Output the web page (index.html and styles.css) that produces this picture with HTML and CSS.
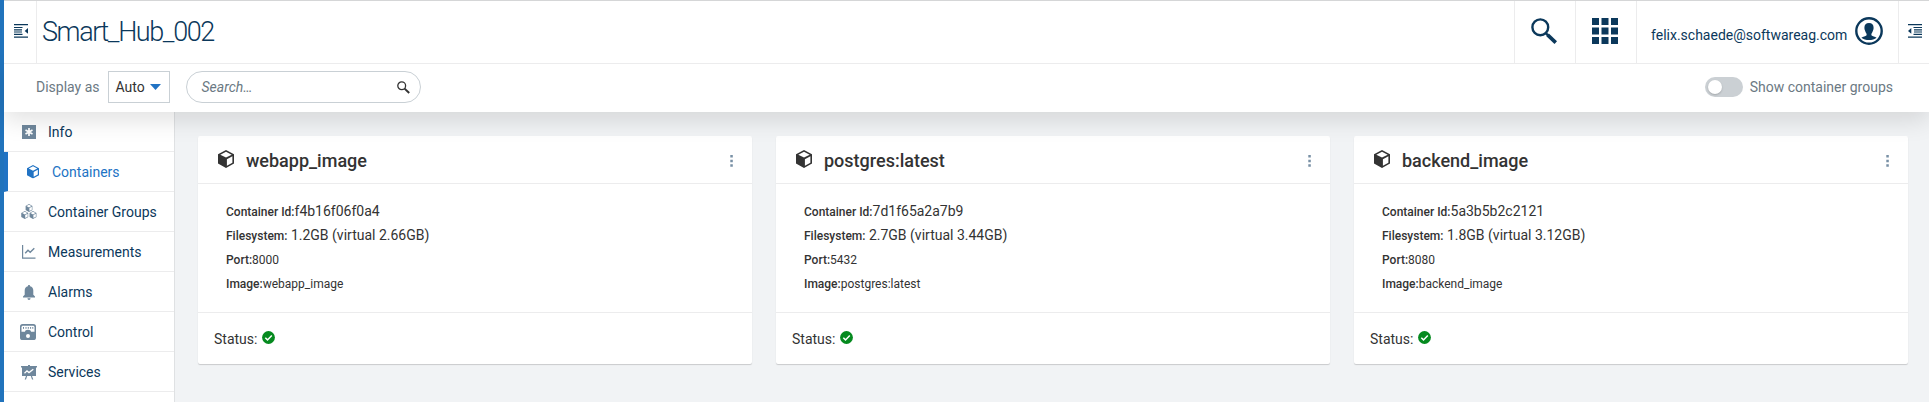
FILE: index.html
```html
<!DOCTYPE html>
<html lang="en">
<head>
<meta charset="utf-8">
<title>Smart_Hub_002</title>
<link rel="stylesheet" href="styles.css">
</head>
<body>
<svg class="defs" width="0" height="0">
  <symbol id="cube" viewBox="0 0 16 18">
    <path fill="currentColor" fill-rule="evenodd" d="M8 0 16 4.3V13.6L8 18 0 13.6V4.3ZM8 1.7 2.3 4.7 8 7.6 13.7 4.7ZM8.9 9.2V15.7L14.4 12.7V6.3Z"/>
  </symbol>
  <symbol id="check" viewBox="0 0 13 13">
    <circle cx="6.5" cy="6.5" r="6.4" fill="#058a1f"/>
    <path d="M3.3 6.8 5.5 8.9 9.8 4.5" fill="none" stroke="#fff" stroke-width="1.5"/>
  </symbol>
  <symbol id="dots" viewBox="0 0 3 12">
    <path fill="#7890a5" d="M.3 0h2.5v2.5H.3zM.3 4.7h2.5v2.5H.3zM.3 9.3h2.5v2.5H.3z"/>
  </symbol>
</svg>
<div class="app">
  <header class="header">
    <button class="cell toggle-nav" aria-label="Toggle navigation">
      <svg width="14" height="14" viewBox="0 0 14 14"><path fill="currentColor" d="M0 0h14v1.2H0zM0 3h8.5v1.1H0zM0 5.3h8v1.1H0zM0 7.5h8v1.1H0zM0 9.8h8.5v1.1H0zM0 12.5h14v1.2H0zM14 4v5.8L10.7 6.9z"/></svg>
    </button>
    <h1 class="title">Smart_Hub_002</h1>
    <button class="cell tool" aria-label="Search">
      <svg width="26" height="26" viewBox="0 0 26 26"><g fill="none" stroke="currentColor"><circle cx="9.3" cy="9.3" r="7.9" stroke-width="2.4"/><path d="M15 15.3 17 17.3" stroke-width="2.4"/><path d="M16.6 16.8 24.8 24.6" stroke-width="3.7"/></g></svg>
    </button>
    <button class="cell tool" aria-label="Applications">
      <svg width="26" height="26" viewBox="0 0 26 26"><path fill="currentColor" d="M0 0h7v7H0zM9.5 0h7v7h-7zM19 0h7v7h-7zM0 9.5h7v7H0zM9.5 9.5h7v7h-7zM19 9.5h7v7h-7zM0 19h7v7H0zM9.5 19h7v7h-7zM19 19h7v7h-7z"/></svg>
    </button>
    <div class="cell user">
      <span class="email">felix.schaede@softwareag.com</span>
      <svg width="28" height="28" viewBox="0 0 28 28"><circle cx="14" cy="14" r="12.7" fill="none" stroke="currentColor" stroke-width="2.4"/><path fill="currentColor" d="M14 6c3 0 4.7 2 4.6 4.8 0 1.200-.2 2-.5 2.500-.4 1.600-1.100 2.800-1.700 3.500v1.500c1.200 1 3.600 1.200 5.200 2.400C19.600 22.300 17 23 14 23s-5.600-.7-7.600-2.300c1.600-1.200 4-1.400 5.200-2.400v-1.500c-.6-.7-1.300-1.900-1.700-3.500-.3-.5-.5-1.300-.5-2.500C9.300 8 11 6 14 6z"/></svg>
    </div>
    <button class="cell toggle-side" aria-label="Toggle drawer">
      <svg width="14" height="14" viewBox="0 0 14 14"><path fill="currentColor" d="M0 0h14v1.2H0zM5.500 3H14v1.100H5.500zM6 5.300h8v1.100H6zM6 7.500h8v1.100H6zM5.500 9.800H14v1.100H5.500zM0 12.500h14v1.200H0zM0 6.900 3.300 4v5.800z"/></svg>
    </button>
  </header>

  <div class="toolbar">
    <span class="label">Display as</span>
    <div class="select">Auto <svg width="11" height="6" viewBox="0 0 11 6"><path fill="#2173c4" d="M0 0h11L5.500 6z"/></svg></div>
    <div class="search">
      <span>Search…</span>
      <svg width="13" height="13" viewBox="0 0 13 13"><g fill="none" stroke="#333"><circle cx="4.700" cy="4.700" r="3.900" stroke-width="1.300"/><path d="M7.600 7.600 12.200 12" stroke-width="2"/></g></svg>
    </div>
    <div class="switch"><i></i></div>
    <span class="label">Show container groups</span>
  </div>

  <div class="body">
    <nav class="nav">
      <a class="item"><svg width="14" height="14" viewBox="0 0 14 14"><path fill="currentColor" d="M0 0h14v14H0z"/><path stroke="#fff" stroke-width="1.700" d="M7 3v8M3.500 5l7 4M3.500 9l7-4"/></svg><span>Info</span></a>
      <a class="item active"><svg width="12" height="13.500"><use href="#cube"/></svg><span>Containers</span></a>
      <a class="item"><svg width="16" height="16" viewBox="0 0 16 16"><use href="#cube" x="4.300" y="0" width="7.400" height="8"/><use href="#cube" x="0" y="7" width="7.600" height="8"/><use href="#cube" x="8.200" y="7" width="7.600" height="8"/></svg><span>Container Groups</span></a>
      <a class="item"><svg width="14" height="14" viewBox="0 0 14 14"><path fill="none" stroke="currentColor" stroke-width="1.200" d="M.6 0v13.200H13.500"/><path fill="none" stroke="currentColor" stroke-width="1.400" d="M3.200 8.300 6 5.300 8.200 7.300 12.300 3.300"/></svg><span>Measurements</span></a>
      <a class="item"><svg width="12" height="15" viewBox="0 0 12 15"><path fill="currentColor" d="M6 0c.7 0 1.100.5 1.100 1.200C9.200 1.700 10.300 3.500 10.300 5.500v4.300L12 11.500v1H0v-1l1.700-1.700V5.500C1.700 3.500 2.800 1.700 4.900 1.200 4.900.5 5.300 0 6 0zM4.500 13.300h3C7.500 14.300 6.900 15 6 15s-1.500-.7-1.500-1.700z"/></svg><span>Alarms</span></a>
      <a class="item wide"><svg width="16" height="16" viewBox="0 0 16 16"><rect width="16" height="16" rx="2.600" fill="currentColor"/><path fill="#fff" d="M1.500 3.200C1.500 2.200 2.200 1.700 3 1.700h10c.8 0 1.500.5 1.500 1.500v4.600h-13z"/><path fill="none" stroke="currentColor" d="M3.500 3v1.800M6 3v1.800M8.300 3v1.800M10.600 3v1.800M12.800 3v1.800"/><path fill="currentColor" d="M5 8c0-1.500 1.200-2.300 3-2.300s3 .8 3 2.300z"/><circle cx="8" cy="12" r="2" fill="#fff"/></svg><span>Control</span></a>
      <a class="item"><svg width="16" height="15" viewBox="0 0 16 15"><path fill="currentColor" d="M0 1h7V0h2v1h7v1.500h-1V11h-4l1.300 3.500H11L9.800 11H6.200L5 14.500H3.700L5 11H1V2.500H0z"/><path fill="none" stroke="#fff" stroke-width="1.300" d="M3.500 8.300 6 5.900l2 1.700 4.300-3.300"/></svg><span>Services</span></a>
    </nav>
    <main class="cards">
      <section class="card">
        <header><svg class="cube" width="16" height="18"><use href="#cube"/></svg><h2>webapp_image</h2><svg class="more" width="3" height="12"><use href="#dots"/></svg></header>
        <div class="info">
          <p><b>Container Id:</b><span>f4b16f06f0a4</span></p>
          <p><b>Filesystem:</b><span> 1.2GB (virtual 2.66GB)</span></p>
          <p><b>Port:</b>8000</p>
          <p><b>Image:</b>webapp_image</p>
        </div>
        <footer>Status:<svg width="13" height="13"><use href="#check"/></svg></footer>
      </section>
      <section class="card">
        <header><svg class="cube" width="16" height="18"><use href="#cube"/></svg><h2>postgres:latest</h2><svg class="more" width="3" height="12"><use href="#dots"/></svg></header>
        <div class="info">
          <p><b>Container Id:</b><span>7d1f65a2a7b9</span></p>
          <p><b>Filesystem:</b><span> 2.7GB (virtual 3.44GB)</span></p>
          <p><b>Port:</b>5432</p>
          <p><b>Image:</b>postgres:latest</p>
        </div>
        <footer>Status:<svg width="13" height="13"><use href="#check"/></svg></footer>
      </section>
      <section class="card">
        <header><svg class="cube" width="16" height="18"><use href="#cube"/></svg><h2>backend_image</h2><svg class="more" width="3" height="12"><use href="#dots"/></svg></header>
        <div class="info">
          <p><b>Container Id:</b><span>5a3b5b2c2121</span></p>
          <p><b>Filesystem:</b><span> 1.8GB (virtual 3.12GB)</span></p>
          <p><b>Port:</b>8080</p>
          <p><b>Image:</b>backend_image</p>
        </div>
        <footer>Status:<svg width="13" height="13"><use href="#check"/></svg></footer>
      </section>
    </main>
  </div>
</div>
</body>
</html>
```

FILE: styles.css
```css
* { box-sizing: border-box; }
body {
  margin: 0;
  height: 402px;
  overflow: hidden;
  background: #f1f3f5;
  color: #333;
  font: 14px/20px Roboto, "Liberation Sans", sans-serif;
}
.defs { position: absolute; }
svg { display: block; flex: none; }
button { border: 0; background: none; padding: 0; margin: 0; font: inherit; }
.app {
  display: flex;
  flex-direction: column;
  height: 402px;
  border-left: 4px solid #2173bc;
}
.header {
  display: flex;
  flex: none;
  height: 64px;
  background: #fff;
  border-top: 1px solid #d5d6d7;
  border-bottom: 1px solid #ececed;
  color: #0b385b;
  position: relative;
  z-index: 2;
}
.cell { display: flex; color: #0b385b; border-left: 1px solid #ececed; }
.toggle-nav { width: 33px; border-left: 0; border-right: 1px solid #ececed; padding: 23px 0 0 10px; }
.title {
  flex: 1;
  margin: 0;
  padding: 15px 0 0 5px;
  font-size: 27px;
  line-height: 32px;
  font-weight: 300;
  letter-spacing: -1.4px;
}
.tool { width: 61px; padding: 17px 0 0 16px; }
.user { width: 262px; padding: 16px 0 0 14px; justify-content: space-between; padding-right: 15px; }
.email { padding-top: 8px; }
.toggle-side { width: 31px; padding: 23px 0 0 9px; }
.toolbar {
  display: flex;
  align-items: center;
  flex: none;
  height: 48px;
  padding: 0 36px 2px 32px;
  background: #fff;
  color: #6b7983;
  box-shadow: 0 8px 24px rgba(0, 0, 0, 0.12);
  position: relative;
  z-index: 1;
}
.select {
  display: flex;
  align-items: center;
  justify-content: space-between;
  width: 62px;
  height: 32px;
  margin: 0 16px 0 auto;
  padding: 0 8px 0 7px;
  border: 1px solid #c9d0d5;
  color: #333;
}
.label + .select { margin-left: 8px; }
.search {
  display: flex;
  align-items: center;
  justify-content: space-between;
  width: 235px;
  height: 32px;
  padding: 0 10px 0 15px;
  border: 1px solid #c9d0d5;
  border-radius: 16px;
  font-style: italic;
}
.switch {
  width: 38px;
  height: 20px;
  margin: 0 7px 0 auto;
  padding: 3px;
  border-radius: 10px;
  background: #cbd0d4;
}
.switch i { display: block; width: 14px; height: 14px; border-radius: 50%; background: #fff; box-shadow: 0 1px 2px rgba(0, 0, 0, .2); }
.body { display: flex; flex: 1; }
.nav { width: 171px; background: #fff; border-right: 1px solid #dfe1e3; }
.item {
  display: grid;
  grid-template-columns: 18px 1fr;
  column-gap: 10px;
  align-items: center;
  justify-items: center;
  height: 40px;
  padding: 1px 0 0 16px;
  border-bottom: 1px solid #ececed;
  color: #0b385b;
}
.item svg { color: #6f879c; }
.item span { justify-self: start; }
.active { border-left: 4px solid #2173c4; color: #2173c4; }
.active svg { color: #2173c4; }
.wide svg { margin-left: -2px; }
.cards { display: grid; flex: 1; grid-template-columns: repeat(3, 554px); gap: 24px; padding: 24px 21px 38px 23px; }
.card {
  display: flex;
  flex-direction: column;
  height: 228px;
  background: #fff;
  border-radius: 2px;
  box-shadow: 0 1px 1px rgba(0, 0, 0, .17);
}
.card header { display: flex; align-items: center; height: 48px; padding: 0 19px 0 20px; border-bottom: 1px solid #ececed; }
.card h2 { flex: 1; margin: 2px 0 0 12px; font-size: 18px; line-height: 24px; font-weight: 500; }
.cube { margin-top: -1px; }
.more { margin-top: 2px; }
.info { flex: 1; padding: 16px 28px; font-size: 12px; }
.info p { margin: 0; height: 24px; line-height: 24px; }
.info b { font-weight: 500; }
.info span { font-size: 14px; line-height: 16px; white-space: pre; }
.card footer { display: flex; align-items: center; gap: 5px; height: 52px; padding: 0 16px; border-top: 1px solid #ececed; }
.card footer svg { margin-top: -3px; }
```
